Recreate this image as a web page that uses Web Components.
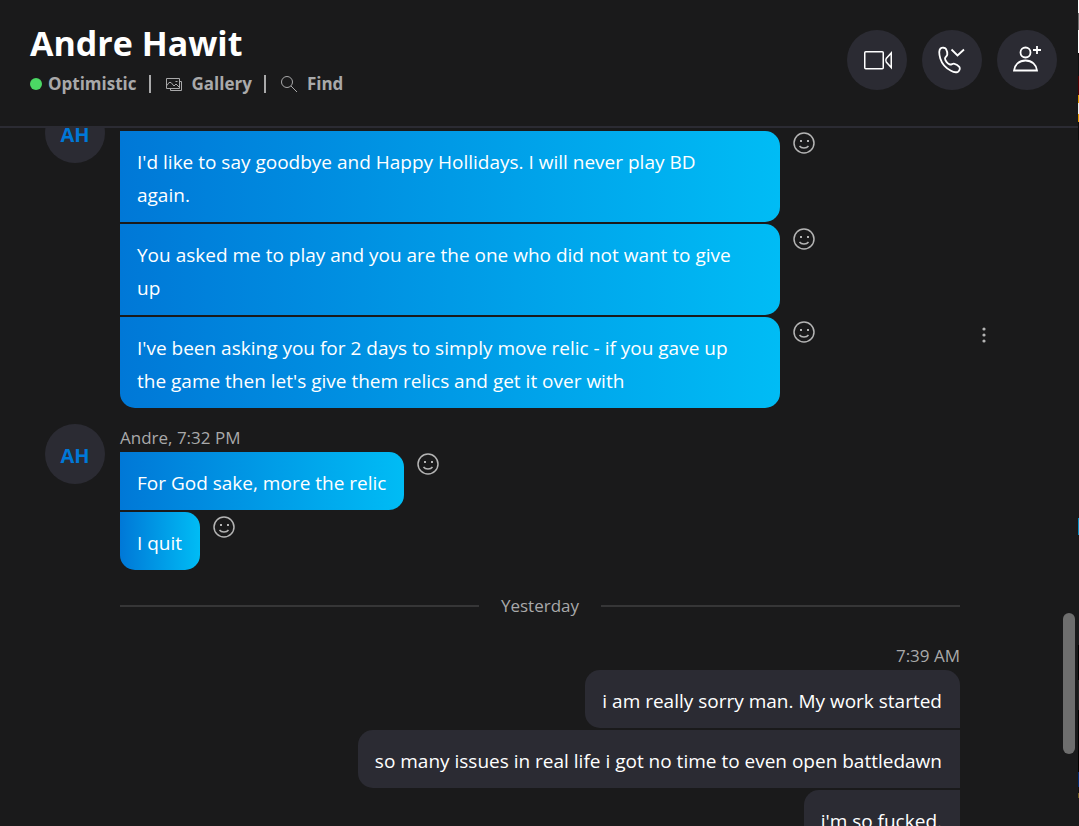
<!DOCTYPE html>
<html lang="en">
<head>
<meta charset="utf-8">
<title>Andre Hawit</title>
<style>
html, body { margin: 0; height: 100%; background: #1a1a1b; }
body { font-family: "Open Sans", "Noto Sans", sans-serif; color: #fff; overflow: hidden; }
</style>
</head>
<body>
<chat-app>
  <chat-header slot="header" name="Andre Hawit" mood="Optimistic"></chat-header>
  <message-group initials="AH" label="">
    <chat-bubble long first>I'd like to say goodbye and Happy Hollidays. I will never play BD again.</chat-bubble>
    <chat-bubble long>You asked me to play and you are the one who did not want to give up</chat-bubble>
    <chat-bubble long last menu>I've been asking you for 2 days to simply move relic - if you gave up the game then let's give them relics and get it over with</chat-bubble>
  </message-group>
  <message-group initials="AH" label="Andre, 7:32 PM">
    <chat-bubble first>For God sake, more the relic</chat-bubble>
    <chat-bubble last>I quit</chat-bubble>
  </message-group>
  <day-divider>Yesterday</day-divider>
  <message-group mine label="7:39 AM">
    <chat-bubble mine first>i am really sorry man. My work started</chat-bubble>
    <chat-bubble mine>so many issues in real life i got no time to even open battledawn</chat-bubble>
    <chat-bubble mine>i'm so fucked.</chat-bubble>
  </message-group>
</chat-app>
<script>
const define = (name, render) => customElements.define(name, class extends HTMLElement {
  connectedCallback() {
    if (this.shadowRoot) return;
    this.attachShadow({ mode: 'open' }).innerHTML = render(this);
  }
});

define('icon-button', el => `
<style>
:host { display: block; }
button { width: 60px; height: 60px; border: 0; padding: 0; border-radius: 50%; background: #2b2b33; color: #fff; display: grid; place-items: center; }
</style>
<button type="button" aria-label="${el.getAttribute('label')}"><slot></slot></button>`);

define('chat-header', el => `
<style>
:host { display: flex; justify-content: space-between; align-items: flex-start; box-sizing: border-box; height: 128px; padding: 20px 21px 0 30px; border-bottom: 2px solid #2b2b33; }
h1 { margin: 0; font-size: 34px; line-height: 46px; font-weight: 700; }
.meta { display: flex; align-items: center; height: 36px; font-size: 17px; line-height: 36px; font-weight: 700; color: #a9a9aa; }
.dot { width: 12px; height: 12px; border-radius: 50%; background: #4bd864; margin-right: 6px; }
.bar { width: 2px; height: 18px; background: #a9a9aa; margin: 0 14px 0 12px; }
button { display: flex; align-items: center; gap: 9px; border: 0; padding: 0; background: none; color: inherit; font: inherit; }
svg { display: block; fill: none; stroke: currentColor; }
.actions { display: flex; gap: 15px; padding-top: 10px; }
</style>
<div>
  <h1>${el.getAttribute('name')}</h1>
  <div class="meta">
    <span class="dot"></span><span>${el.getAttribute('mood')}</span><span class="bar"></span>
    <button type="button"><svg width="18" height="16" viewBox="0 0 18 16"><path d="M1.500 2.500h13v10h-13zM14.500 5.500h2v9h-11v-2M2 9.500l2-3h2l3 3.500 2-2 3.500 3.500M10.500 5.500h2"/></svg>Gallery</button>
    <span class="bar"></span>
    <button type="button"><svg width="18" height="18" viewBox="0 0 18 18"><circle cx="7" cy="7" r="5.500"/><path d="M11 11l6 6"/></svg>Find</button>
  </div>
</div>
<div class="actions">
  <icon-button label="Video call"><svg width="30" height="30" viewBox="0 0 30 30" stroke-width="1.500"><rect x="2.750" y="6.750" width="18.500" height="17" rx="1"/><path d="M29.250 8v14.500l-5-5.500q-1-1.750 0-3.500z"/></svg></icon-button>
  <icon-button label="Call"><svg width="30" height="30" viewBox="0 0 30 30" stroke-width="1.800"><path d="M3.500 3.500c1.500-1.200 4.500-1 5.500.5.800 1.500 1.500 3.500 1.300 5.500-.3 1.700-2.300 2.500-2.300 4 0 2 2.700 5.500 5 6 2 .2 2.500-1.200 4.500-.7 1.500.4 3.700 1.700 4.800 3 1.200 1.700.2 4-1.300 5-2 .8-5 .2-7-1C9.500 23.500 5 19 3.300 13.500 2.300 10 1.500 5.500 3.500 3.500zM14.500 4.500l6 6 6.500-6"/></svg></icon-button>
  <icon-button label="Add people"><svg width="30" height="30" viewBox="0 0 30 30" stroke-width="1.800"><circle cx="13.500" cy="7.500" r="5"/><path d="M2 25.500c.5-5.500 5-10 11.500-10s11 4.500 11.500 10zM25 1v8M21 5h8"/></svg></icon-button>
</div>`);

define('chat-bubble', el => {
  const mine = el.hasAttribute('mine');
  const smile = `<button class="react" type="button" aria-label="React"><svg width="22" height="22" viewBox="0 0 22 22"><circle cx="11" cy="11" r="10" fill="none" stroke="currentColor" stroke-width="1.500"/><path d="M6.500 14c1 1.400 2.600 1.900 4.500 1.900s3.500-.5 4.500-1.900" fill="none" stroke="currentColor" stroke-width="1.500"/><path d="M7 8h2v2H7zM14 8h2v2h-2z" fill="currentColor"/></svg></button>`;
  const dots = `<button class="more" type="button" aria-label="More options"><svg width="4" height="16" viewBox="0 0 4 16" fill="currentColor"><circle cx="2" cy="2" r="1.600"/><circle cx="2" cy="8" r="1.600"/><circle cx="2" cy="14" r="1.600"/></svg></button>`;
  return `
<style>
:host { display: flex; align-items: flex-start; position: relative; }
:host([mine]) { justify-content: flex-end; }
p { margin: 0; box-sizing: border-box; max-width: 660px; padding: 15px 18px 10px 17px; font-size: 19px; line-height: 33px; color: #fff; background: linear-gradient(90deg, #0078d7, #00bcf5); border-radius: 0 15px 15px 0; }
:host([long]) p { padding-right: 36px; }
:host([last]) p { border-bottom-left-radius: 15px; }
:host([mine]) p { background: #2b2b33; border-radius: 15px 0 0 15px; }
:host([mine][first]) p { border-top-right-radius: 15px; }
button { border: 0; padding: 0; background: none; color: #b4b4b4; display: block; }
.react { margin: 4px 0 0 13px; }
:host([first]) .react { margin-top: 1px; }
.more { position: absolute; left: calc(100% + 22px); top: 10px; }
svg { display: block; }
</style>
<p><slot></slot></p>${mine ? '' : smile}${el.hasAttribute('menu') ? dots : ''}`;
});

define('message-group', el => `
<style>
:host { display: block; position: relative; }
.label { font-size: 17px; line-height: 28px; color: #a9a9aa; }
:host([mine]) .label { text-align: right; }
.list { display: flex; flex-direction: column; gap: 2px; }
.avatar { position: absolute; left: -75px; top: 0; width: 60px; height: 60px; border-radius: 50%; background: #2b2b33; color: #0078d7; font-size: 20px; font-weight: 700; line-height: 64px; text-align: center; }
</style>
${el.hasAttribute('initials') ? `<div class="avatar">${el.getAttribute('initials')}</div>` : ''}
<div class="label">${el.getAttribute('label') || '&nbsp;'}</div>
<div class="list"><slot></slot></div>`);

define('day-divider', () => `
<style>
:host { display: flex; align-items: center; gap: 22px; height: 40px; font-size: 17px; line-height: 28px; color: #a9a9aa; }
:host::before, :host::after { content: ""; flex: 1; height: 2px; background: #363637; }
</style>
<slot></slot>`);

/* Thin strip of the desktop that shows beside the chat window. */
define('desktop-edge', () => `
<style>
:host { display: block; background: linear-gradient(#fff 0 13px, #777 13px 30px, #fff 30px 53px, #111 53px 76px, #500 76px 95px, #e69a00 95px 103px, #eee 103px 114px, #e69a00 114px 122px, #0c0c0c 122px 140px, #1a1a1b 140px 518px, #0a8fc4 518px 535px, #1a1a1b 535px 645px, #000 645px 680px, #222 680px 710px, #000 710px 772px, #002a70 772px 787px, #111 787px 793px, #6b5a20 793px 798px, #1a1a1b 798px); }
</style>`);

define('chat-app', () => `
<style>
:host { display: grid; grid-template-columns: minmax(0, 1fr) 1px; height: 100vh; overflow: hidden; }
.window { display: flex; flex-direction: column; min-height: 0; }
.scroller { flex: 1; min-height: 0; overflow: hidden; display: grid; grid-template-columns: minmax(0, 1fr) 15px; }
.feed { min-height: 0; overflow: hidden; padding: 0 103px 0 120px; }
.thread { display: flex; flex-direction: column; gap: 16px; margin-top: -25px; }
.track { padding-top: 485px; }
.thumb { width: 12px; height: 141px; border-radius: 6px; background: #6e6e6e; }
</style>
<div class="window">
  <slot name="header"></slot>
  <div class="scroller">
    <main class="feed"><div class="thread"><slot></slot></div></main>
    <div class="track"><div class="thumb"></div></div>
  </div>
</div>
<desktop-edge></desktop-edge>`);
</script>
</body>
</html>
